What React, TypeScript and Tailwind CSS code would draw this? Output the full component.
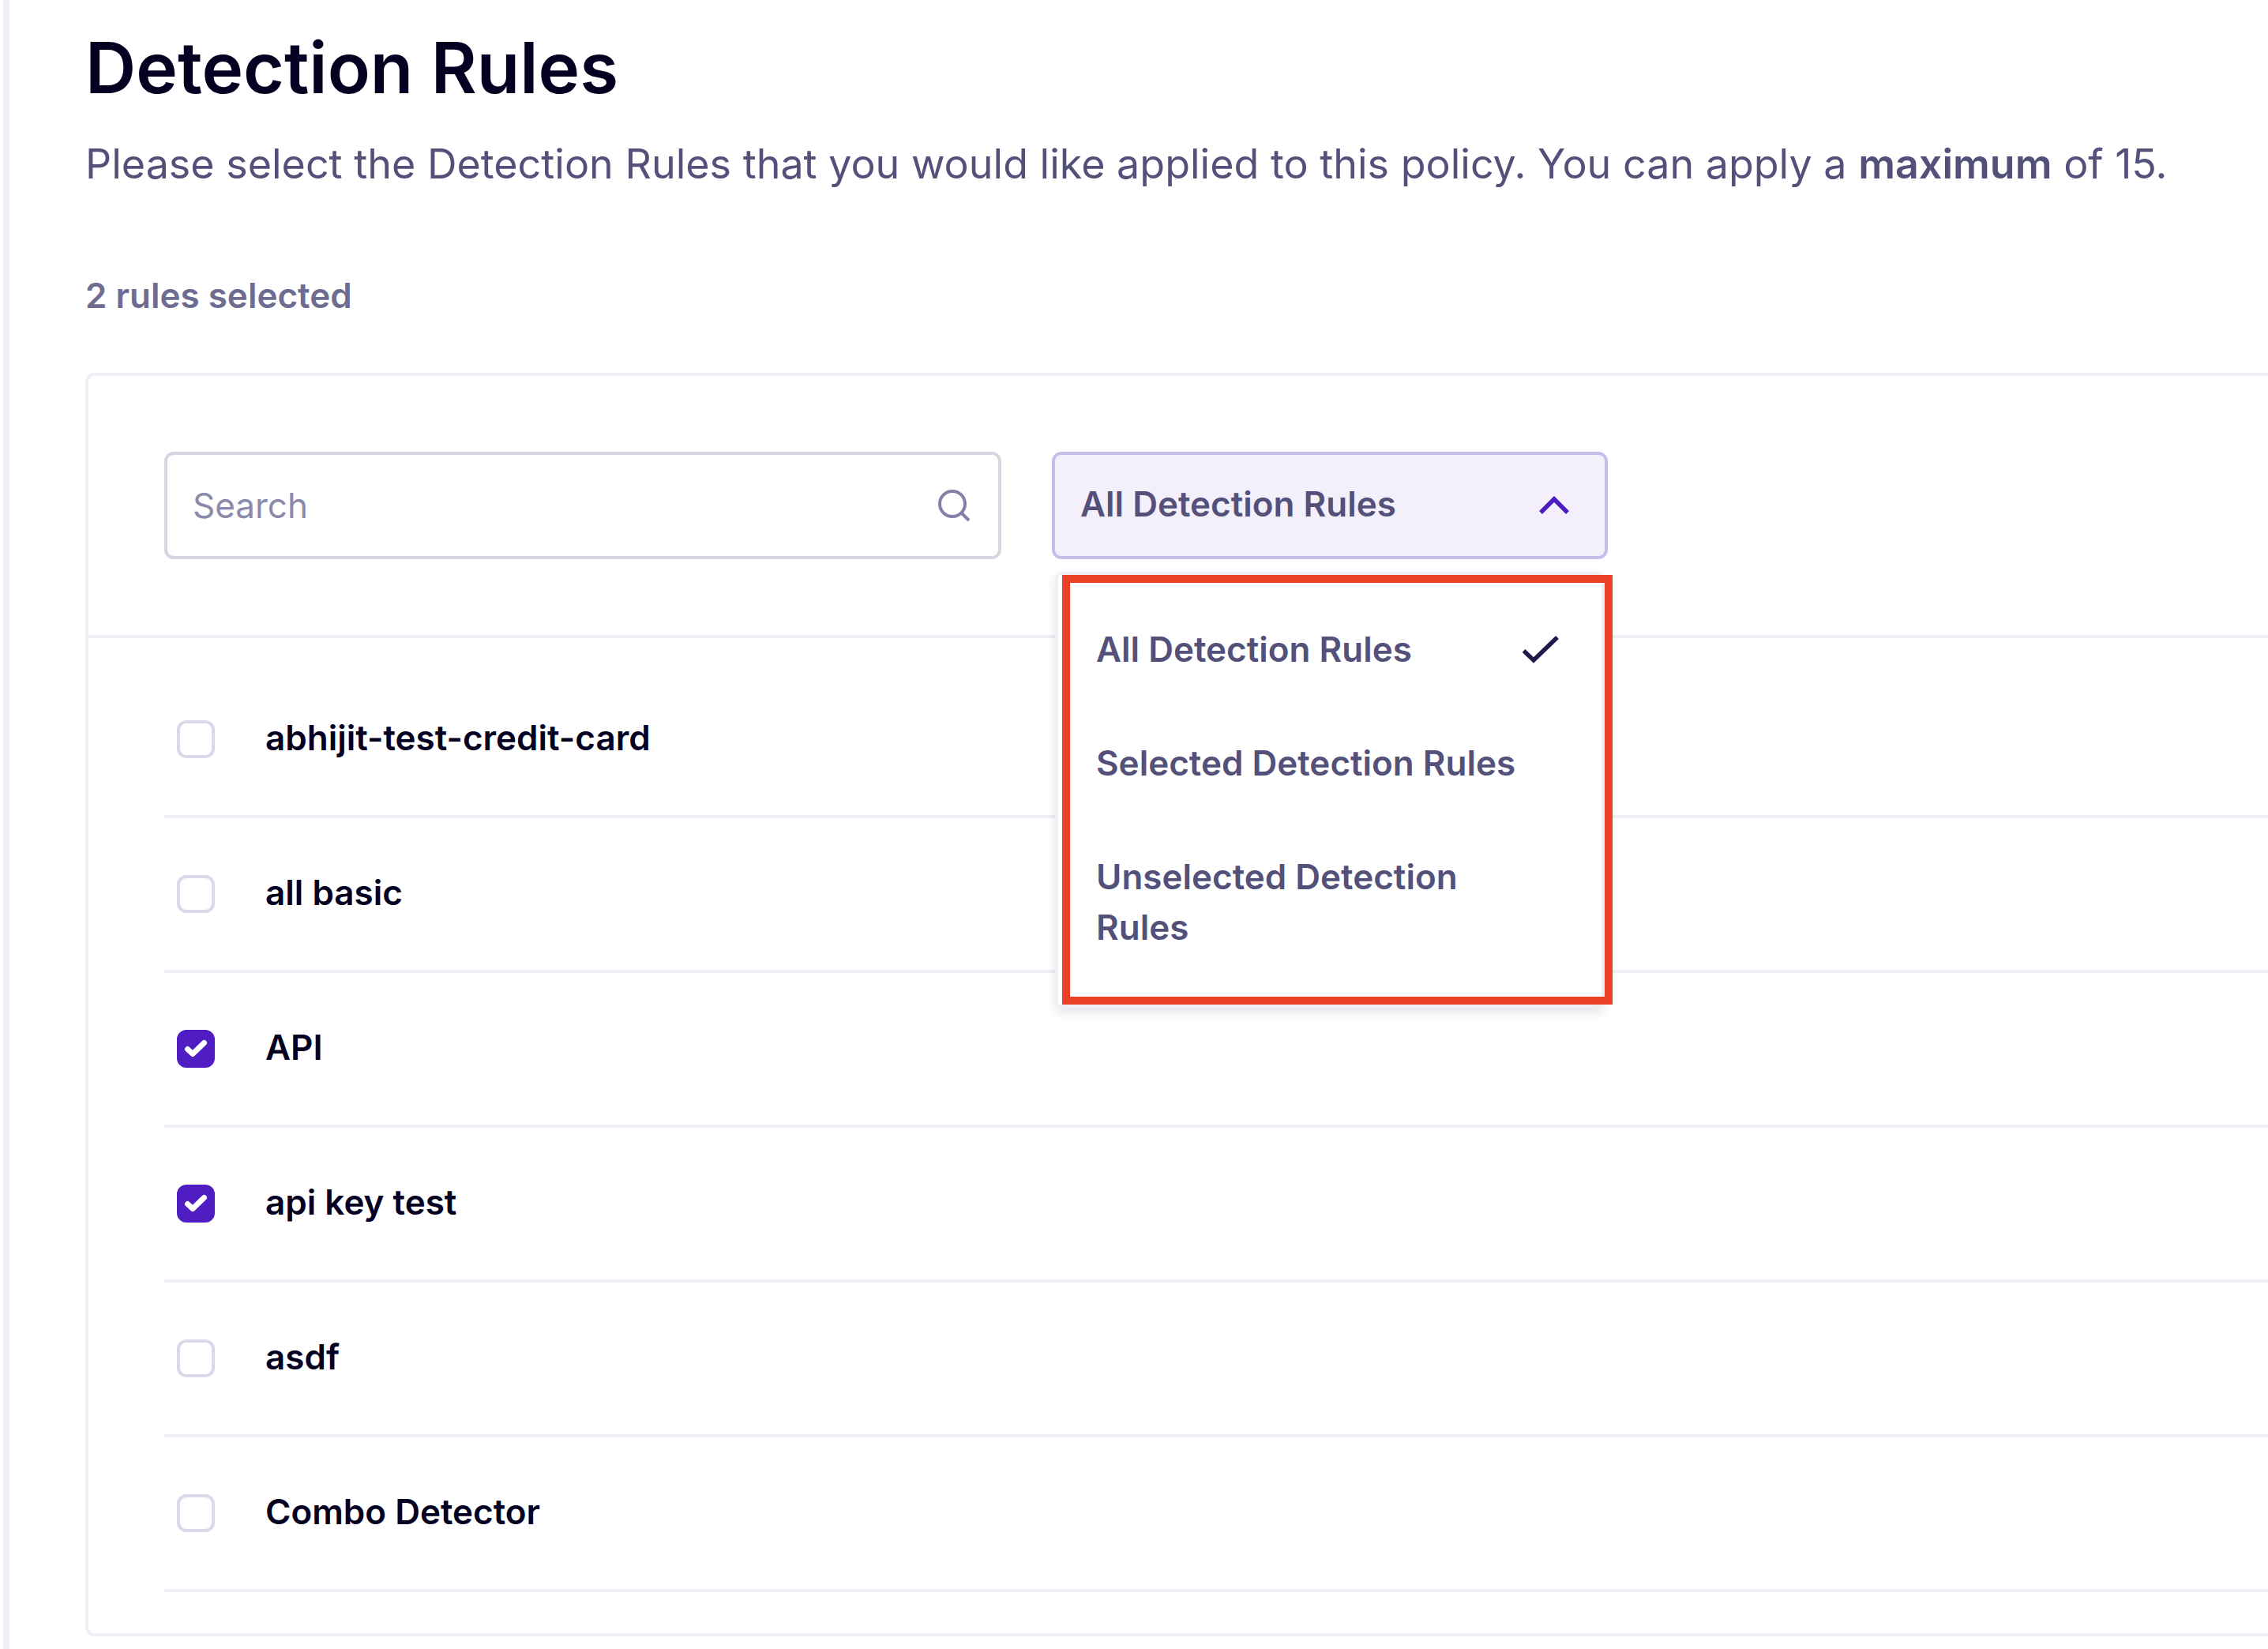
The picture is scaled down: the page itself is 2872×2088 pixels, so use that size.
import { useState } from "react";

const RULES = [
  { name: "abhijit-test-credit-card", selected: false },
  { name: "all basic", selected: false },
  { name: "API", selected: true },
  { name: "api key test", selected: true },
  { name: "asdf", selected: false },
  { name: "Combo Detector", selected: false },
];

const FILTERS = ["All Detection Rules", "Selected Detection Rules", "Unselected Detection Rules"];

function SearchIcon() {
  return (
    <svg className="size-12 shrink-0" viewBox="0 0 48 48" fill="none" stroke="#8380a6" strokeWidth="4" aria-hidden="true">
      <circle cx="22" cy="22" r="16" />
      <path d="M33.5 33.5 43 43" />
    </svg>
  );
}

function ChevronUp() {
  return (
    <svg className="size-12 shrink-0" viewBox="0 0 48 48" fill="none" stroke="#4f1bc4" strokeWidth="5.5" aria-hidden="true">
      <path d="M7 33 24 16 41 33" />
    </svg>
  );
}

function CheckIcon() {
  return (
    <svg className="size-12 shrink-0" viewBox="0 0 48 48" fill="none" stroke="#1e1a4b" strokeWidth="5.5" aria-hidden="true">
      <path d="M1.5 26 14 38 44 9" />
    </svg>
  );
}

function RuleRow({ name, selected }: { name: string; selected: boolean }) {
  const [checked, setChecked] = useState(selected);
  return (
    <li className="border-b-4 border-[#f0eff5]">
      <label className="flex h-48 items-center gap-16 pl-4">
        <span className="grid size-12 shrink-0">
          <input
            type="checkbox"
            checked={checked}
            onChange={() => setChecked(!checked)}
            className="peer col-start-1 row-start-1 size-12 appearance-none rounded-xl border-4 border-[#dbd8ea] bg-white checked:border-[#4f1dc2] checked:bg-[#4f1dc2]"
          />
          <svg
            className="pointer-events-none invisible col-start-1 row-start-1 size-12 peer-checked:visible"
            viewBox="0 0 48 48"
            fill="none"
            stroke="white"
            strokeWidth="7"
            strokeLinecap="round"
            strokeLinejoin="round"
            aria-hidden="true"
          >
            <path d="M13.5 24.5 20 30.5 34.5 16.5" />
          </svg>
        </span>
        <span className="pb-1 text-[44px] leading-[64px] font-semibold text-[#030022]">{name}</span>
      </label>
    </li>
  );
}

function FilterSelect() {
  const [active, setActive] = useState(FILTERS[0]);
  const [open, setOpen] = useState(true);
  return (
    <div className="relative w-[704px]">
      <button
        type="button"
        aria-haspopup="listbox"
        aria-expanded={open}
        onClick={() => setOpen(!open)}
        className="flex h-[136px] w-full items-center justify-between rounded-xl border-4 border-[#c9bdec] bg-[#f3f0fb] pr-10 pl-8 text-left"
      >
        <span className="pb-1 text-[44px] leading-[64px] font-semibold text-[#53517a]">{active}</span>
        <ChevronUp />
      </button>
      {open && (
        <div className="absolute top-full right-1 left-1 z-10 mt-4 rounded-lg border-4 border-[#f0eff5] bg-white pt-[22px] pb-[26px] shadow-[0_6px_14px_rgba(0,0,0,0.1)]">
          <div role="listbox" aria-label="Filter rules">
            {FILTERS.map((filter) => (
              <button
                key={filter}
                type="button"
                role="option"
                aria-selected={filter === active}
                onClick={() => setActive(filter)}
                className="flex w-full items-start justify-between py-10 pr-13 pl-12 text-left"
              >
                <span className="max-w-[560px] text-[44px] leading-[64px] font-semibold text-[#53517a]">{filter}</span>
                {filter === active && (
                  <span className="flex h-16 items-center">
                    <CheckIcon />
                  </span>
                )}
              </button>
            ))}
          </div>
          <div className="pointer-events-none absolute inset-y-0 -right-[14px] left-[5px] border-[10px] border-[#ea4025]" />
        </div>
      )}
    </div>
  );
}

export default function App() {
  return (
    <div className="min-h-screen overflow-x-hidden bg-white pl-1 font-['Inter',sans-serif]">
      <main className="min-h-screen border-l-8 border-[#f0eff5] pt-[30px] pl-24">
        <h1 className="text-[89px] leading-[112px] font-semibold text-[#030022]">Detection Rules</h1>
        <p className="mt-6 text-[52px] leading-[84px] text-[#53517a]">
          Please select the Detection Rules that you would like applied to this policy. You can apply a{" "}
          <strong className="font-semibold">maximum</strong> of 15.
        </p>
        <p className="mt-[92px] text-[44px] leading-[64px] font-semibold text-[#6e6c91]">2 rules selected</p>

        <section className="mt-[66px] rounded-l-xl border-4 border-r-0 border-[#f0eff5]">
          <div className="flex gap-16 border-b-4 border-[#f0eff5] p-24">
            <label className="flex h-[136px] w-[1060px] items-center rounded-xl border-4 border-[#d6d5e0] px-8">
              <input
                type="text"
                aria-label="Search"
                placeholder="Search"
                className="min-w-0 flex-1 bg-transparent text-[44px] leading-[64px] text-[#53517a] outline-none placeholder:text-[#8c8aab]"
              />
              <SearchIcon />
            </label>
            <FilterSelect />
          </div>
          <ul className="pt-8 pb-[52px] pl-24">
            {RULES.map((rule) => (
              <RuleRow key={rule.name} {...rule} />
            ))}
          </ul>
        </section>
      </main>
    </div>
  );
}
